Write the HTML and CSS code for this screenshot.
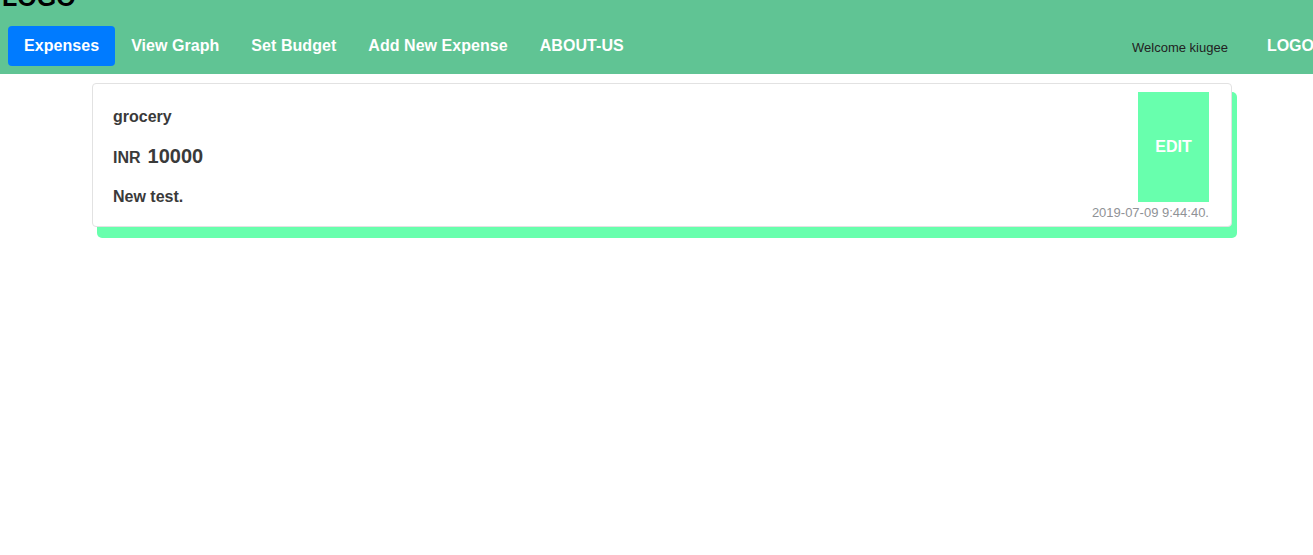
FILE: index.html
```html
<!DOCTYPE html>
<html>
<head>
<meta charset="utf-8">
<link rel="stylesheet" href="styles.css">
</head>
<body>
<header class="navbar">
  <div class="brand">LOGO</div>
  <nav class="links">
    <a class="link active">Expenses</a>
    <a class="link">View Graph</a>
    <a class="link">Set Budget</a>
    <a class="link">Add New Expense</a>
    <a class="link">ABOUT-US</a>
  </nav>
  <div class="right">
    <span class="welcome">Welcome kiugee</span>
    <span class="logo-right">LOGO</span>
  </div>
</header>
<main class="list">
  <div class="card-wrap">
    <div class="card">
      <div class="info">
        <div class="category">grocery</div>
        <div class="amount"><span class="cur">INR</span><span class="num">10000</span></div>
        <div class="desc">New test.</div>
      </div>
      <div class="side">
        <button class="edit">EDIT</button>
        <div class="date">2019-07-09 9:44:40.</div>
      </div>
    </div>
  </div>
</main>
</body>
</html>
```

FILE: styles.css
```css
* { box-sizing: border-box; }
html, body { min-height: 100%; height: 100%; }
body {
  margin: 0;
  font-family: "Liberation Sans", Arial, sans-serif;
  background: #fff;
  color: #3a3a3a;
}
.navbar {
  position: relative;
  height: 74px;
  background: #60c494;
  display: flex;
  align-items: center;
  padding: 18px 0 0 8px;
}
.brand {
  position: absolute;
  left: 2px;
  top: -15px;
  font-size: 25px;
  line-height: 1;
  font-weight: bold;
  color: #000;
}
.links {
  display: flex;
  align-items: center;
}
.link {
  display: block;
  padding: 8px 16px;
  font-size: 16px;
  line-height: 24px;
  font-weight: bold;
  letter-spacing: 0.05px;
  color: #fff;
  border-radius: 4px;
}
.link.active { background: #007bff; }
.right {
  margin-left: auto;
  display: flex;
  align-items: center;
  white-space: nowrap;
  width: 181px;
  overflow: hidden;
}
.welcome {
  font-size: 13px;
  color: #222;
  padding-top: 2px;
}
.logo-right {
  margin-left: 39px;
  font-size: 16px;
  font-weight: bold;
  color: #fff;
}
.list {
  padding: 9px 0 40px 92px;
}
.card-wrap {
  position: relative;
  isolation: isolate;
  width: 1140px;
}
.card-wrap::before {
  content: "";
  position: absolute;
  left: 5px;
  top: 9px;
  right: -5px;
  bottom: -11px;
  background: #68ffad;
  border-radius: 5px;
  z-index: -1;
}
.card {
  height: 144px;
  border: 1px solid #e2e2e2;
  border-radius: 4px;
  background: #fff;
  display: flex;
  justify-content: space-between;
}
.info {
  padding: 21px 20px 0 20px;
  font-weight: bold;
}
.category {
  font-size: 16px;
  line-height: 24px;
}
.amount {
  margin-top: 15px;
  display: flex;
  align-items: baseline;
  line-height: 24px;
}
.cur { font-size: 16px; }
.num { font-size: 20px; margin-left: 7px; }
.desc {
  margin-top: 15px;
  font-size: 16px;
  line-height: 24px;
}
.side {
  padding: 8px 22px 0 0;
  display: flex;
  flex-direction: column;
  align-items: flex-end;
}
.edit {
  width: 71px;
  height: 110px;
  background: #68ffad;
  border: none;
  color: #fff;
  font-family: "Liberation Sans", Arial, sans-serif;
  font-size: 16px;
  font-weight: bold;
  padding: 0;
}
.date {
  margin-top: 3px;
  font-size: 13px;
  line-height: 15px;
  color: #8f9296;
}
```
